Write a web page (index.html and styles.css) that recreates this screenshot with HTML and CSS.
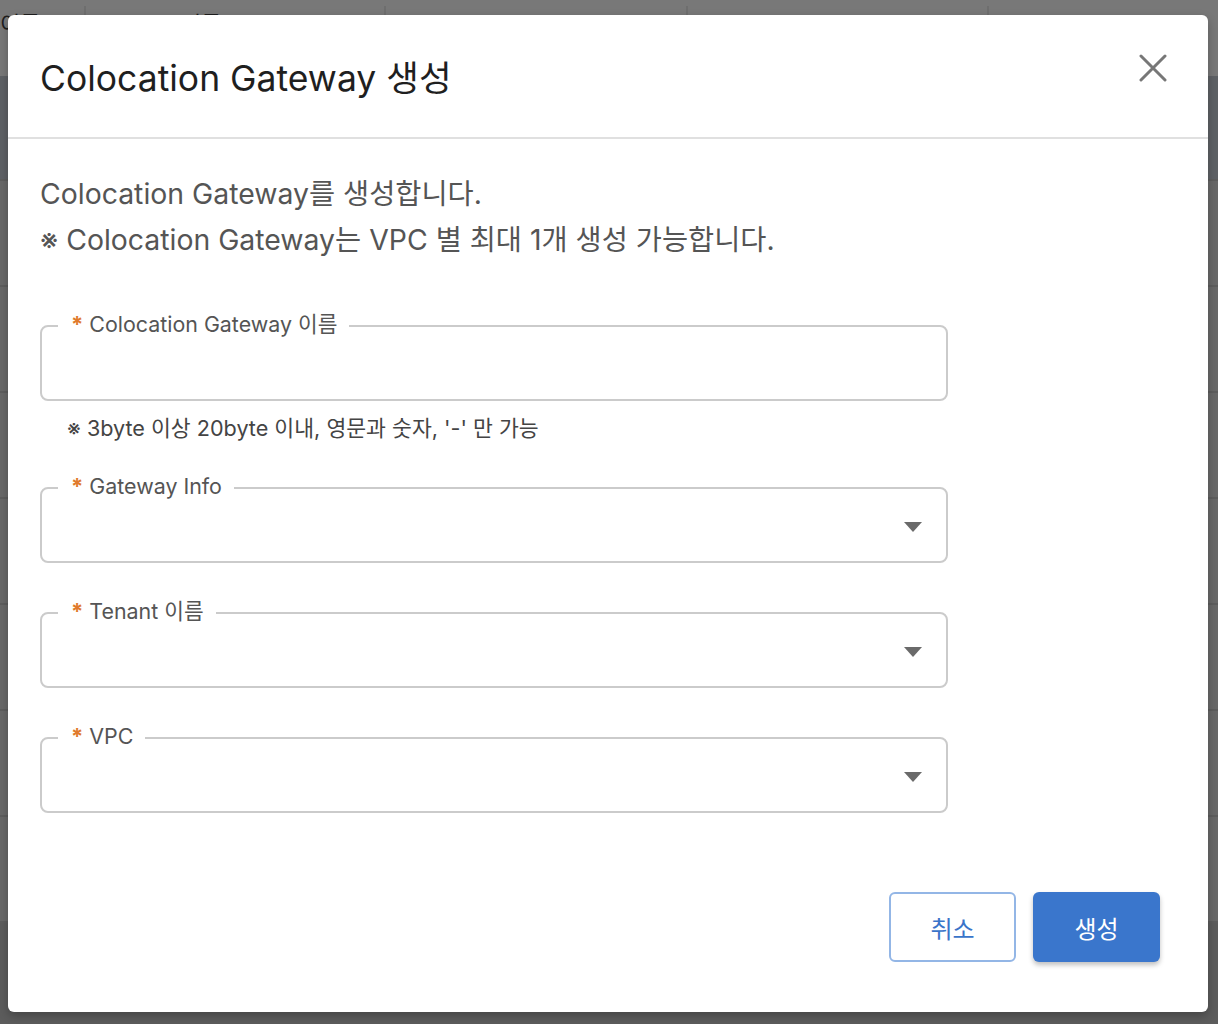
FILE: index.html
```html
<!DOCTYPE html>
<html lang="ko">
<head>
<meta charset="utf-8">
<title>Colocation Gateway 생성</title>
<link rel="stylesheet" href="styles.css">
</head>
<body>
<div class="page">
  <div class="thead">
    <div class="th th-1">이름</div>
    <div class="th th-2">Tenant 이름</div>
    <div class="th th-3">VPC</div>
    <div class="th th-4">Gateway Info</div>
    <div class="th th-5">Path Group</div>
  </div>
  <div class="row row-sel"></div>
  <div class="row"></div>
  <div class="row"></div>
  <div class="row"></div>
  <div class="row"></div>
  <div class="row"></div>
  <div class="row"></div>
  <div class="row"></div>
</div>

<div class="modal">
  <div class="modal-header">
    <h2 class="modal-title">Colocation Gateway 생성</h2>
    <button class="close-btn" aria-label="닫기">
      <svg width="28" height="28" viewBox="0 0 28 28"><path d="M2 2 L26 26 M26 2 L2 26" stroke="#777" stroke-width="3" stroke-linecap="round" fill="none"/></svg>
    </button>
  </div>
  <div class="modal-body">
    <p class="intro">Colocation Gateway를 생성합니다.</p>
    <p class="intro">※ Colocation Gateway는 VPC 별 최대 1개 생성 가능합니다.</p>

    <fieldset class="field field-first">
      <legend class="field-label"><span class="req">*</span> Colocation Gateway 이름</legend>
      <div class="field-input"></div>
    </fieldset>
    <p class="hint">※ 3byte 이상 20byte 이내, 영문과 숫자, '-' 만 가능</p>

    <fieldset class="field field-select field-after-hint">
      <legend class="field-label"><span class="req">*</span> Gateway Info</legend>
      <div class="field-input"><span class="caret"></span></div>
    </fieldset>

    <fieldset class="field field-select">
      <legend class="field-label"><span class="req">*</span> Tenant 이름</legend>
      <div class="field-input"><span class="caret"></span></div>
    </fieldset>

    <fieldset class="field field-select">
      <legend class="field-label"><span class="req">*</span> VPC</legend>
      <div class="field-input"><span class="caret"></span></div>
    </fieldset>
  </div>
  <div class="modal-footer">
    <button class="btn btn-outline">취소</button>
    <button class="btn btn-primary">생성</button>
  </div>
</div>
</body>
</html>
```
FILE: styles.css
```css
* { box-sizing: border-box; }
html, body { margin: 0; padding: 0; }
body {
  width: 1218px;
  height: 1024px;
  overflow: hidden;
  background: #5c5c5c;
  font-family: Inter, "Noto Sans CJK KR", sans-serif;
  position: relative;
}
.page {
  display: flex;
  flex-direction: column;
}
.thead {
  display: flex;
  height: 76px;
  background: #787878;
}
.th {
  padding: 5px 18px 0;
  font-size: 22px;
  color: #1e1e1e;
  border-right: 2px solid #6e6e6e;
  height: 40px;
  margin-top: 6px;
  line-height: 26px;
  white-space: nowrap;
  overflow: hidden;
}
.th-1 { width: 86px; padding-left: 0; }
.th-2 { width: 300px; }
.th-3 { width: 302px; }
.th-4 { width: 301px; }
.th-5 { flex: 1; border-right: none; }
.row {
  height: 106px;
  background: #686868;
  border-bottom: 2px solid #5d5d5d;
}
.row-sel {
  height: 105px;
  background: #5e6165;
}

.modal {
  position: absolute;
  left: 8px;
  top: 15px;
  width: 1200px;
  height: 997px;
  background: #fff;
  border-radius: 6px;
  box-shadow: 0 4px 10px rgba(0,0,0,0.25);
  display: flex;
  flex-direction: column;
}
.modal-header {
  height: 124px;
  border-bottom: 2px solid #e0e0e0;
  display: flex;
  align-items: center;
  justify-content: space-between;
  padding: 0 41px 0 32px;
}
.modal-title {
  margin: 0;
  font-size: 35.5px;
  font-weight: 400;
  color: #1f1f1f;
  margin-top: -2px;
}
.close-btn {
  border: none;
  background: none;
  padding: 0;
  width: 28px;
  height: 28px;
  margin-top: -16px;
  cursor: pointer;
}
.close-btn svg { display: block; }

.modal-body {
  padding: 32px 32px 0;
  flex: 1;
}
.intro {
  margin: 0;
  font-size: 28.4px;
  line-height: 46px;
  color: #555;
}
.field {
  margin: 36px 0 0;
  padding: 0 16px;
  width: 908px;
  border: 2px solid #cbcbcb;
  border-radius: 8px;
}
.field-first { margin-top: 49px; }
.field-after-hint { margin-top: 34px; }
.field-label {
  padding: 0 12px 4px 13px;
  font-size: 21.4px;
  line-height: 24px;
  color: #555;
}
.req {
  color: #e07a2c;
  font-weight: 700;
  font-size: 22px;
}
.field-input {
  height: 59px;
  display: flex;
  align-items: center;
  justify-content: flex-end;
  padding: 0 8px 10px 0;
}
.caret {
  width: 0;
  height: 0;
  border-left: 9px solid transparent;
  border-right: 9px solid transparent;
  border-top: 10px solid #6a6a6a;
}
.hint {
  margin: 15px 0 0 27px;
  font-size: 21.6px;
  line-height: 24px;
  color: #444;
}

.modal-footer {
  display: flex;
  justify-content: flex-end;
  gap: 17px;
  padding: 0 48px 50px 0;
}
.btn {
  width: 127px;
  height: 70px;
  border-radius: 6px;
  font-family: Inter, "Noto Sans CJK KR", sans-serif;
  font-size: 24px;
  cursor: pointer;
}
.btn-outline {
  background: #fff;
  border: 2px solid #93b6e6;
  color: #3a74c9;
}
.btn-primary {
  background: #3a76cc;
  border: none;
  color: #fff;
  box-shadow: 0 3px 5px rgba(0,0,0,0.25);
}
```
